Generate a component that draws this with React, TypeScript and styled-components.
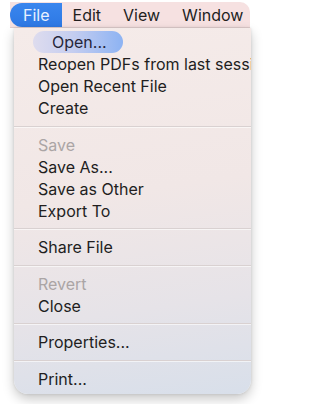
import React from 'react';
import styled, { createGlobalStyle } from 'styled-components';

const GlobalStyle = createGlobalStyle`
  html, body {
    margin: 0;
    padding: 0;
    background: #ffffff;
  }
  body {
    font-family: 'Inter', 'Liberation Sans', sans-serif;
    -webkit-font-smoothing: antialiased;
  }
`;

const Page = styled.div`
  width: 268px;
  height: 404px;
  padding: 2px 0 0 10px;
  box-sizing: border-box;
  display: flex;
  flex-direction: column;
`;

const MenuBar = styled.div`
  width: 240px;
  height: 26px;
  display: flex;
  align-items: center;
  background: #f6e1e1;
  border-top-right-radius: 10px;
  border-bottom: 1px solid #e2cfcf;
  box-sizing: border-box;
  font-size: 16px;
  color: #221e1e;
`;

const MenuTitle = styled.div<{ $active?: boolean }>`
  height: 24px;
  display: flex;
  align-items: center;
  padding: ${({ $active }) => ($active ? '0 12px 0 13px' : '0 11px')};
  border-radius: ${({ $active }) => ($active ? '12px 0 0 12px' : '0')};
  background: ${({ $active }) =>
    $active ? 'linear-gradient(to bottom, #3a86ee, #2d78e4)' : 'transparent'};
  color: ${({ $active }) => ($active ? '#e8f0ff' : 'inherit')};
`;

const Panel = styled.div`
  width: 237px;
  margin-left: 4px;
  padding: 3px 0 4px 0;
  box-sizing: border-box;
  overflow: hidden;
  border-radius: 0 0 14px 14px;
  background: linear-gradient(172deg, #f5ebe9 0%, #f1e7e6 45%, #e6e3e8 75%, #d8dfea 100%);
  box-shadow: 0 5px 12px rgba(0, 0, 0, 0.22), 0 0 3px rgba(0, 0, 0, 0.12);
  font-size: 16px;
`;

const Item = styled.div<{ $disabled?: boolean }>`
  height: 22px;
  display: flex;
  align-items: center;
  padding-left: 24px;
  white-space: nowrap;
  color: ${({ $disabled }) => ($disabled ? '#aba5a5' : '#221e1e')};
`;

const Highlight = styled.div`
  height: 22px;
  width: 90px;
  margin-left: 19px;
  padding-left: 19px;
  box-sizing: border-box;
  display: flex;
  align-items: center;
  border-radius: 11px;
  background: linear-gradient(90deg, #dedcee 0%, #c4cdf0 45%, #8db3f3 100%);
  color: #26263a;
`;

const Separator = styled.div`
  height: 14.5px;
  display: flex;
  align-items: center;

  &::after {
    content: '';
    flex: 1;
    height: 1px;
    background: #d9d1d1;
    box-shadow: 0 1px 0 rgba(255, 255, 255, 0.6);
  }
`;

type Entry = { label: string; disabled?: boolean } | 'sep';

const entries: Entry[] = [
  { label: 'Reopen PDFs from last session' },
  { label: 'Open Recent File' },
  { label: 'Create' },
  'sep',
  { label: 'Save', disabled: true },
  { label: 'Save As...' },
  { label: 'Save as Other' },
  { label: 'Export To' },
  'sep',
  { label: 'Share File' },
  'sep',
  { label: 'Revert', disabled: true },
  { label: 'Close' },
  'sep',
  { label: 'Properties...' },
  'sep',
  { label: 'Print...' },
];

const App = () => (
  <>
    <GlobalStyle />
    <Page>
      <MenuBar>
        <MenuTitle $active>File</MenuTitle>
        <MenuTitle>Edit</MenuTitle>
        <MenuTitle>View</MenuTitle>
        <MenuTitle>Window</MenuTitle>
      </MenuBar>
      <Panel>
        <Highlight>Open...</Highlight>
        {entries.map((e, i) =>
          e === 'sep' ? (
            <Separator key={i} />
          ) : (
            <Item key={i} $disabled={e.disabled}>
              {e.label}
            </Item>
          )
        )}
      </Panel>
    </Page>
  </>
);

export default App;
